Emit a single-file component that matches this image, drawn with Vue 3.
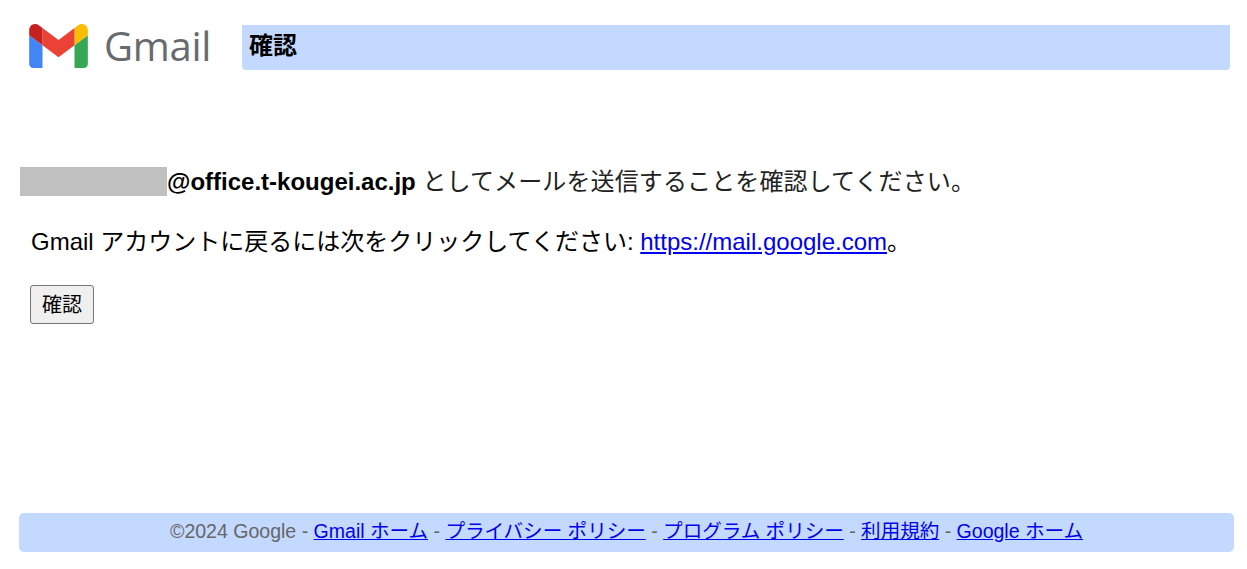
<script setup>
const links = ['プライバシー ポリシー', 'プログラム ポリシー', '利用規約', 'Google ホーム']
</script>

<template>
  <div class="page">
    <header class="top">
      <div class="logo">
        <svg class="mark" viewBox="52 42 88 66" width="59" height="44" aria-hidden="true">
          <path fill="#4285f4" d="M58 108h14V74L52 59v43c0 3.32 2.69 6 6 6" />
          <path fill="#34a853" d="M120 108h14c3.32 0 6-2.69 6-6V59l-20 15" />
          <path fill="#fbbc04" d="M120 48v26l20-15v-8c0-7.42-8.47-11.65-14.4-7.2" />
          <path fill="#ea4335" d="M72 74V48l24 18 24-18v26L96 92" />
          <path fill="#c5221f" d="M52 51v8l20 15V48l-5.6-4.2c-5.94-4.45-14.4-.22-14.4 7.2" />
        </svg>
        <span class="wordmark">Gmail</span>
      </div>
      <h1 class="title">確認</h1>
    </header>

    <main class="content">
      <p class="sender">
        <span class="redacted"></span><b>@office.t-kougei.ac.jp</b> <span class="jp">としてメールを送信することを確認してください。</span>
      </p>
      <p class="back">
        Gmail アカウントに戻るには次をクリックしてください: <a href="#">https://mail.google.com</a>。
      </p>
      <button class="confirm" type="button">確認</button>
    </main>

    <footer class="foot">
      ©2024 Google - <a href="#">Gmail ホーム</a>
      <template v-for="l in links" :key="l"> - <a href="#">{{ l }}</a></template>
    </footer>
  </div>
</template>

<style>
html, body { margin: 0; background: #fff; }
</style>

<style scoped>
.page {
  height: 569px;
  box-sizing: border-box;
  display: flex;
  flex-direction: column;
  padding: 24px 13px 17px 19px;
  font-family: "Liberation Sans", "Noto Sans CJK JP", sans-serif;
  color: #000;
  overflow: hidden;
}
.top {
  display: flex;
  align-items: flex-start;
  padding-right: 4px;
}
.logo {
  display: flex;
  align-items: center;
  width: 223px;
  flex: none;
  padding-left: 10px;
  box-sizing: border-box;
}
.mark { flex: none; display: block; }
.wordmark {
  margin-left: 16px;
  font-family: "Open Sans", sans-serif;
  font-size: 40px;
  font-weight: 500;
  letter-spacing: -0.3px;
  line-height: 44px;
  color: #676a6f;
}
.title {
  flex: 1;
  margin: 1px 0 0;
  height: 45px;
  box-sizing: border-box;
  background: #c3d9ff;
  border-radius: 0 0 4px 4px;
  padding: 0 7px;
  font-size: 24px;
  line-height: 41px;
  font-weight: 700;
}
.content {
  flex: 1;
  padding: 97px 0 0 1px;
}
.sender {
  margin: 0;
  font-size: 24px;
  line-height: 29px;
  height: 29px;
  white-space: nowrap;
  color: #222;
}
.sender b { color: #000; }
.jp { letter-spacing: 0.12px; }
.redacted {
  display: inline-block;
  width: 147px;
  height: 29px;
  background: #c0c0c0;
  vertical-align: top;
}
.back {
  margin: 31px 0 0 11px;
  font-size: 24px;
  line-height: 30px;
  white-space: nowrap;
}
.back a, .foot a { color: #0000ee; text-decoration: underline; }
.confirm {
  display: block;
  margin: 28px 0 0 10px;
  width: 64px;
  height: 39px;
  padding: 0 0 3px;
  border: 1px solid #767676;
  border-radius: 3px;
  background: #efefef;
  color: #000;
  font-family: inherit;
  font-size: 20px;
}
.foot {
  height: 39px;
  box-sizing: border-box;
  background: #c3d9ff;
  border-radius: 5px;
  text-align: center;
  font-size: 19.55px;
  line-height: 36px;
  color: #666;
  white-space: nowrap;
}
</style>
